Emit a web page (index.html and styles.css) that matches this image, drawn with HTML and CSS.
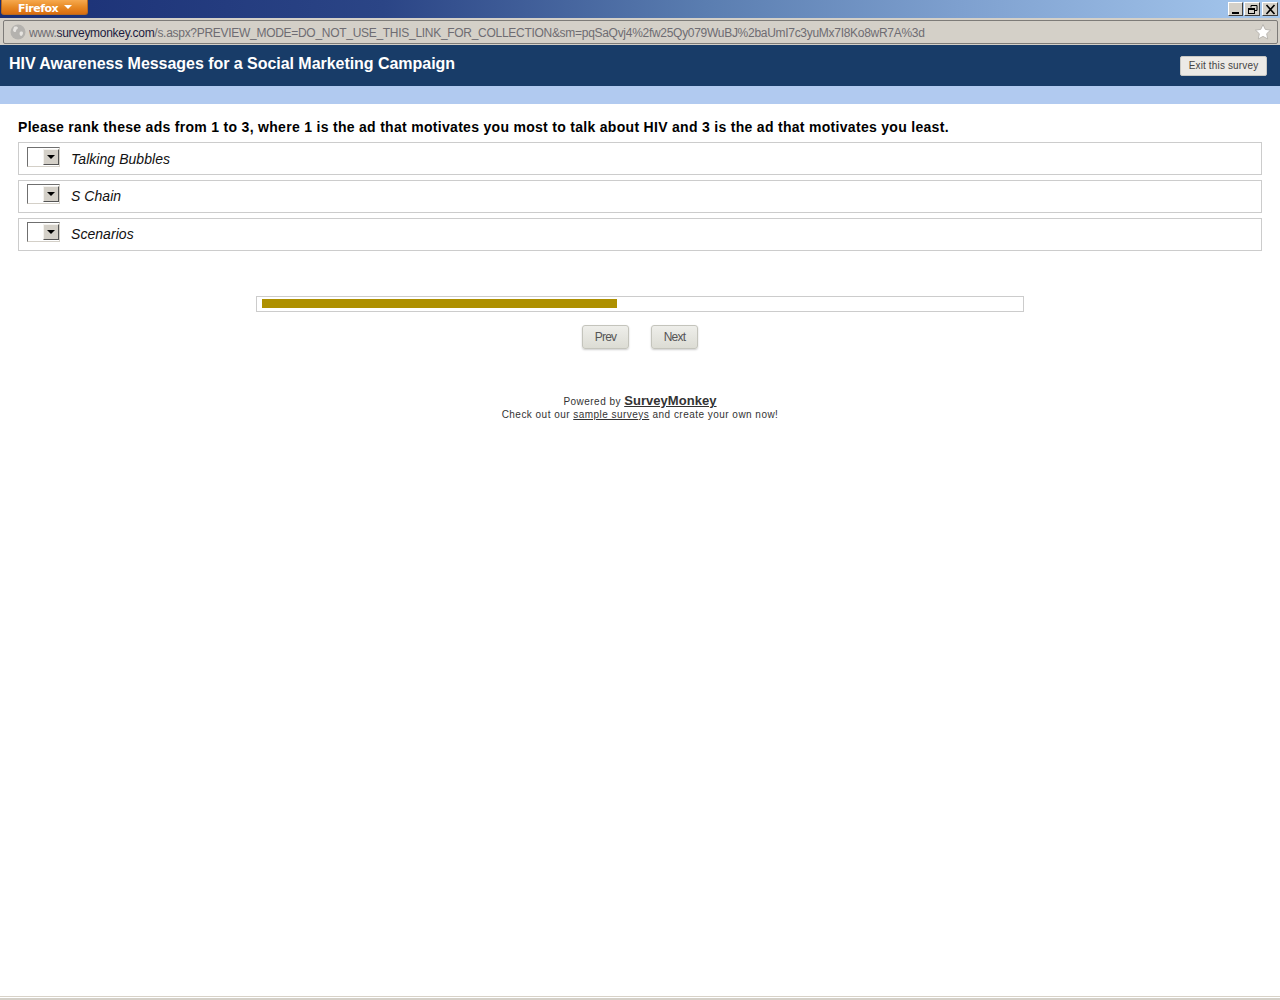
FILE: index.html
```html
<!DOCTYPE html>
<html lang="en">
<head>
<meta charset="utf-8">
<title>HIV Awareness Messages for a Social Marketing Campaign</title>
<link rel="stylesheet" href="styles.css">
</head>
<body>
<div class="page">
  <div class="titlebar">
    <div class="ffbtn"><span>Firefox</span><i class="ffcaret"></i></div>
    <div class="winbtns">
      <div class="winbtn winbtn-min">
        <svg width="13" height="11" viewBox="0 0 13 11"><rect x="3" y="8" width="7" height="2" fill="#000"/></svg>
      </div>
      <div class="winbtn winbtn-max">
        <svg width="13" height="11" viewBox="0 0 13 11"><path d="M5 1.500h6v5h-2M5 1.500v2" fill="none" stroke="#000" stroke-width="1"/><path d="M5 1v1h6V1z" fill="#000"/><rect x="2.500" y="4.500" width="6" height="5" fill="none" stroke="#000"/><rect x="2" y="4" width="7" height="2" fill="#000"/></svg>
      </div>
      <div class="winbtn winbtn-close">
        <svg width="13" height="11" viewBox="0 0 13 11"><path d="M2.500 1l8 9M10.500 1l-8 9" stroke="#000" stroke-width="1.600" fill="none"/></svg>
      </div>
    </div>
  </div>
  <div class="urlstrip">
    <div class="urlbar">
      <svg class="globe" width="16" height="16" viewBox="0 0 16 16"><circle cx="8" cy="8" r="7.500" fill="#b4b2ae"/><path d="M4 3c2-1 4 0 4 1s-2 1-2 3-3 1-3-1zM10 8c2-1 3 0 3 1s-1 3-2 3-2-3-1-4z" fill="#e6e4e0"/></svg>
      <div class="url"><span class="dim">www.</span><span class="dom">surveymonkey.com</span><span class="dim">/s.aspx?PREVIEW_MODE=DO_NOT_USE_THIS_LINK_FOR_COLLECTION&amp;sm=pqSaQvj4%2fw25Qy079WuBJ%2baUmI7c3yuMx7I8Ko8wR7A%3d</span></div>
      <svg class="star" width="18" height="18" viewBox="0 0 18 18"><path d="M9 1.500l2.300 4.900 5.300.7-3.900 3.600 1 5.300L9 13.400 4.300 16l1-5.300L1.400 7.100l5.300-.7z" fill="#fff" stroke="#b9b6b0"/></svg>
    </div>
  </div>
  <header class="surveyhead">
    <h1 class="surveytitle">HIV Awareness Messages for a Social Marketing Campaign</h1>
    <button class="exitbtn">Exit this survey</button>
  </header>
  <div class="subbar"></div>
  <main class="content">
    <p class="question">Please rank these ads from 1 to 3, where 1 is the ad that motivates you most to talk about HIV and 3 is the ad that motivates you least.</p>
    <div class="rows">
      <div class="rankrow"><div class="sel"><div class="selarrow"><i></i></div></div><span class="ranklabel">Talking Bubbles</span></div>
      <div class="rankrow"><div class="sel"><div class="selarrow"><i></i></div></div><span class="ranklabel">S Chain</span></div>
      <div class="rankrow"><div class="sel"><div class="selarrow"><i></i></div></div><span class="ranklabel">Scenarios</span></div>
    </div>
    <div class="progress"><div class="progressfill"></div></div>
    <div class="navbtns">
      <button class="navbtn">Prev</button>
      <button class="navbtn">Next</button>
    </div>
    <div class="footer">
      <div class="powered">Powered by <a class="smlink">SurveyMonkey</a></div>
      <div class="checkout">Check out our <a class="samplelink">sample surveys</a> and create your own now!</div>
    </div>
  </main>
  <div class="bottomedge"></div>
</div>
</body>
</html>
```
FILE: styles.css
```css
* { box-sizing: border-box; }
html, body { margin: 0; padding: 0; height: 100%; }
body { background: #fff; font-family: "Liberation Sans", Arial, sans-serif; overflow: hidden; }
.page { height: 1000px; display: flex; flex-direction: column; }

.titlebar { height: 18px; flex: none; display: flex; justify-content: space-between; align-items: flex-start;
  background: linear-gradient(90deg, #1a2f75 0%, #2b4586 30%, #5a7db0 55%, #7ea0cf 75%, #a6c8ee 100%); }
.ffbtn { width: 87px; height: 15px; margin-left: 1px; background: linear-gradient(#f6a94e, #e88a25 50%, #d96d10);
  border-radius: 0 0 3px 3px; border: 1px solid #b86a20; border-top: 0;
  display: flex; align-items: center; padding: 2px 0 0 16px; gap: 6px; }
.ffbtn span { color: #fff; font: bold 11px "DejaVu Sans", sans-serif; letter-spacing: -0.500px; }
.ffcaret { width: 0; height: 0; border: 4px solid transparent; border-top: 4px solid #fff; border-bottom: 0; margin-top: -3px; }
.winbtns { display: flex; margin: 2px 2px 0 0; }
.winbtn { height: 14px; background: #d4d0c8; border: 1px solid; border-color: #fff #404040 #404040 #fff;
  display: flex; align-items: center; justify-content: center; }
.winbtn svg { flex: none; }
.winbtn-min { width: 15px; }
.winbtn-max { width: 16px; margin-left: 1px; }
.winbtn-close { width: 16px; margin-left: 2px; }

.urlstrip { height: 27px; flex: none; background: #d4d0c8; padding: 2px 2px 1px 3px; }
.urlbar { height: 24px; border: 1px solid #7d7b78; border-radius: 2px; background: #d4d0c8;
  display: flex; align-items: center; padding: 0 5px 0 6px; }
.globe { flex: none; margin-top: -1px; }
.url { flex: 1; margin-left: 3px; padding-top: 2px; font: 12px "Liberation Sans", Arial, sans-serif; letter-spacing: -0.290px; white-space: nowrap; overflow: hidden; }
.dim { color: #6e6c72; }
.dom { color: #1c1c40; }
.star { flex: none; }

.surveyhead { height: 41px; flex: none; background: #183c68; display: flex; justify-content: space-between; padding: 0 13px 0 9px; }
.surveytitle { margin: 8px 0 0; color: #fff; font: bold 16px/21px "Liberation Sans", Arial, sans-serif; letter-spacing: -0.040px; }
.exitbtn { align-self: flex-start; margin-top: 11px; width: 87px; height: 20px; padding: 0 0 2px; background: #eceae6; color: #444;
  border: 1px solid #c8c8c4; border-radius: 2px; font: 10px "Liberation Sans", Arial, sans-serif; letter-spacing: 0.150px; }

.subbar { height: 18px; flex: none; background: #b1caf0; }

.content { flex: 1; padding: 0 18px; }
.question { margin: 15px 0 0; height: 15px; color: #000; font: bold 14px/16px "Liberation Sans", Arial, sans-serif; letter-spacing: 0.300px; white-space: nowrap; }
.rows { margin-top: 8px; display: flex; flex-direction: column; gap: 5px; }
.rankrow { height: 33px; border: 1px solid #ccc; display: flex; align-items: center; padding-left: 8px; }
.sel { width: 33px; height: 20px; margin-top: -3px; background: #fff; border: 1px solid; border-color: #6f6f6f #d4d0c8 #d4d0c8 #6f6f6f; padding: 1px 0 1px 15px; }
.selarrow { width: 16px; height: 16px; background: #d4d0c8; border: 1px solid; border-color: #f4f2ee #555 #555 #f4f2ee; display: flex; align-items: center; justify-content: center; }
.selarrow i { width: 0; height: 0; border: 4px solid transparent; border-top: 4px solid #000; border-bottom: 0; }
.ranklabel { margin-left: 11px; color: #111; font: italic 14px "Liberation Sans", Arial, sans-serif; letter-spacing: 0.050px; }
.rankrow + .rankrow .ranklabel { margin-bottom: 2px; }
.rankrow + .rankrow .sel { margin-top: -5px; }

.progress { width: 768px; height: 16px; margin: 45px auto 0; border: 1px solid #ccc; padding: 2px 5px; }
.progressfill { width: 355px; height: 9px; background: #ae9000; }
.navbtns { margin-top: 13px; display: flex; justify-content: center; gap: 22px; }
.navbtn { width: 47px; height: 24px; padding: 0; background: linear-gradient(#eeeeea, #dcdcd4); color: #555; border: 1px solid #c4c4bc; border-radius: 3px;
  box-shadow: 0 1px 2px rgba(0,0,0,.2); font: 12px "Liberation Sans", Arial, sans-serif; letter-spacing: -0.800px; }

.footer { margin-top: 44px; text-align: center; color: #333; font: 10px "Liberation Sans", Arial, sans-serif; letter-spacing: 0.470px; }
.powered { height: 16px; line-height: 16px; }
.smlink { color: #333; font: bold 13px "Liberation Sans", Arial, sans-serif; text-decoration: underline; letter-spacing: 0.050px; }
.checkout { height: 12px; line-height: 12px; }
.samplelink { color: #333; text-decoration: underline; }

.bottomedge { height: 4px; flex: none; border-top: 1px solid #d8d2c8; border-bottom: 0; background: linear-gradient(#fff 0 1px, #d4d0c8 1px); }
```
